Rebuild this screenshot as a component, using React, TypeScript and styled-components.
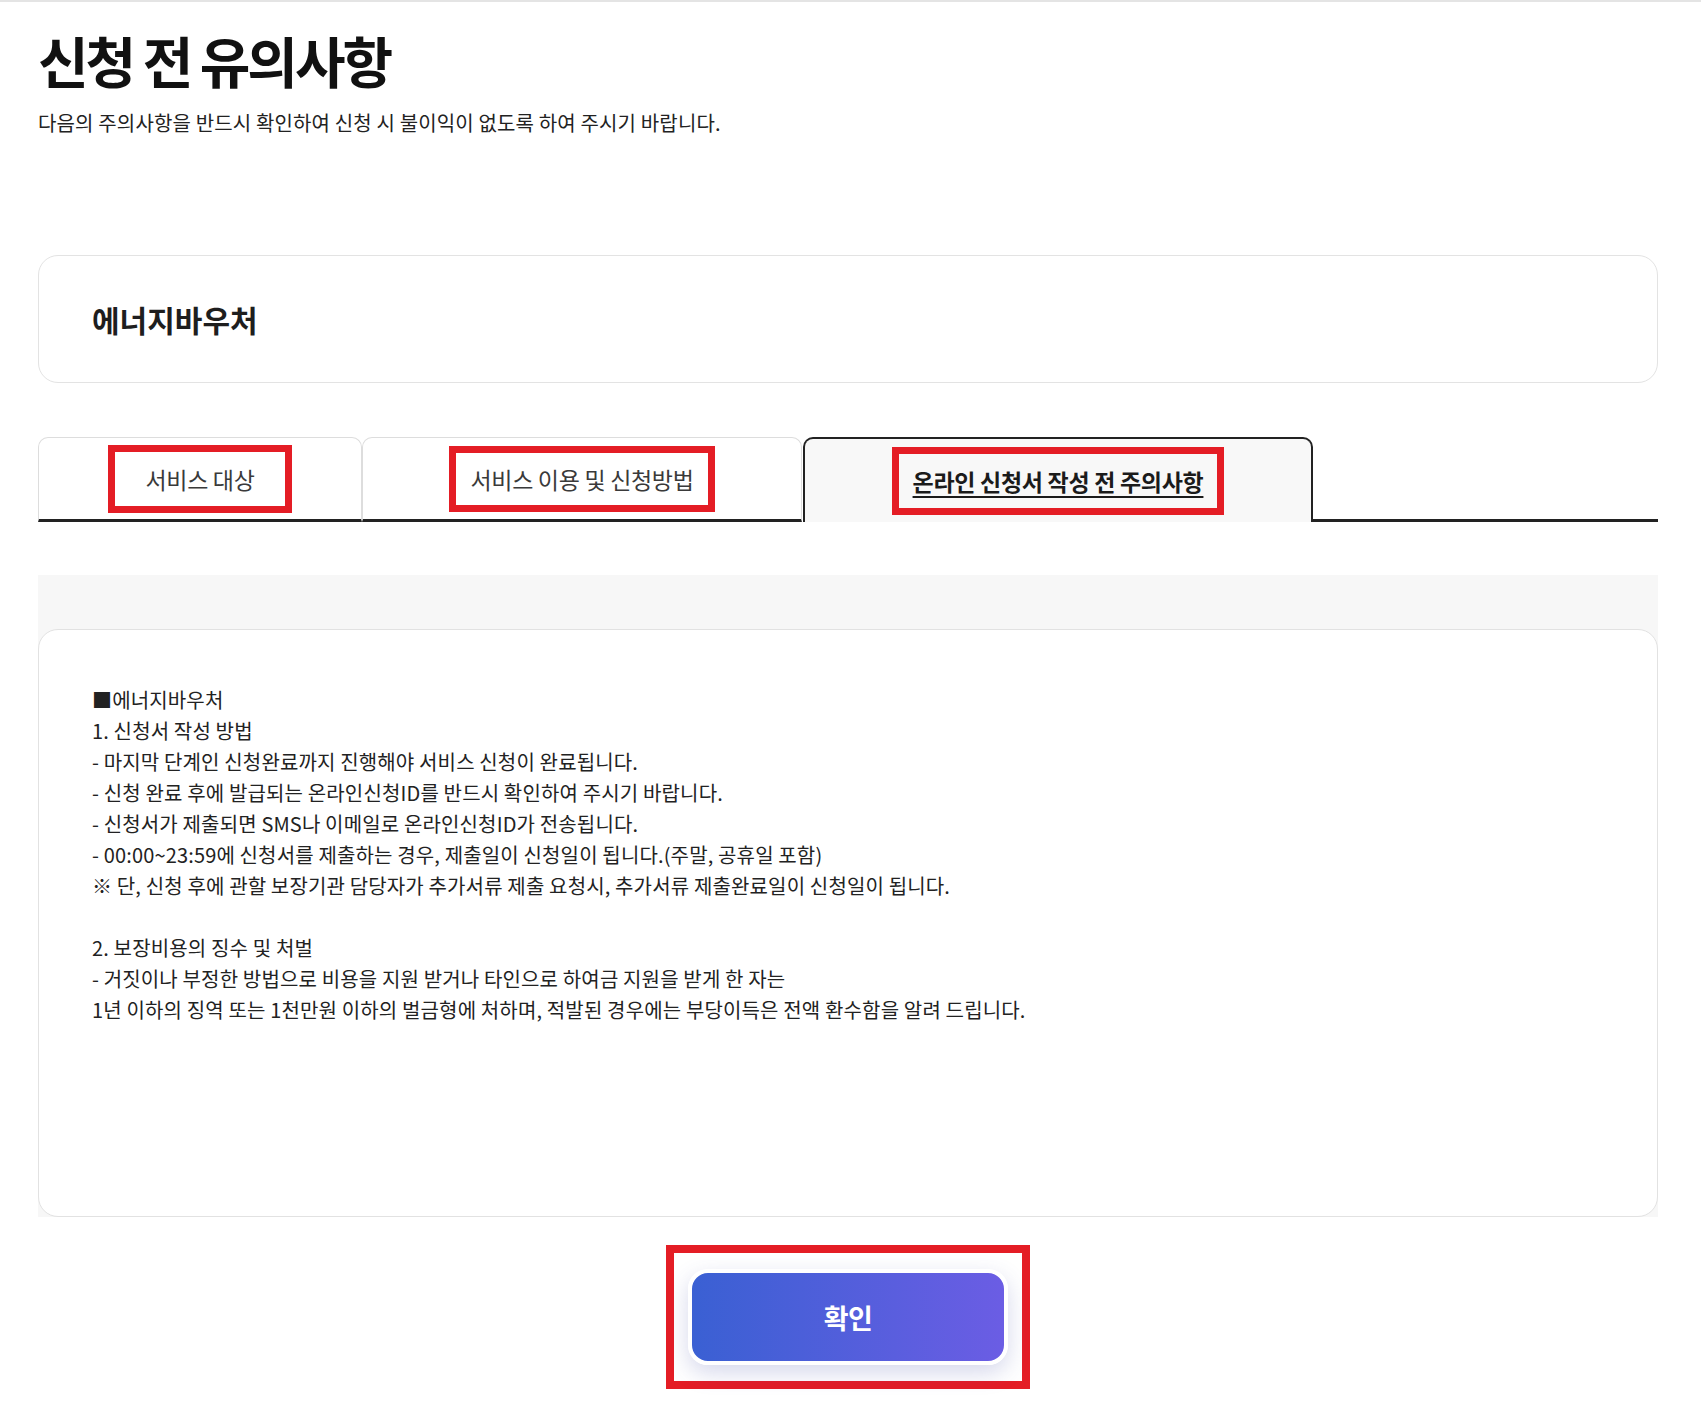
import React from "react";
import styled, { createGlobalStyle, css } from "styled-components";

const GlobalStyle = createGlobalStyle`
  html, body {
    margin: 0;
    padding: 0;
    background: #ffffff;
  }
  body {
    font-family: "Noto Sans CJK KR", "Noto Sans", sans-serif;
    color: #222222;
  }
  * { box-sizing: border-box; }
`;

const Page = styled.div`
  border-top: 2px solid #e4e4e4;
  padding: 25px 43px 16px 38px;
  width: 1701px;
`;

const Title = styled.h1`
  margin: 0;
  font-size: 55px;
  line-height: 64px;
  font-weight: 700;
  letter-spacing: -3px;
  color: #111111;
`;

const Subtitle = styled.p`
  margin: 17px 0 0;
  font-size: 20px;
  line-height: 30px;
  letter-spacing: 0.15px;
  color: #222222;
`;

const ServiceCard = styled.section`
  margin-top: 117px;
  height: 128px;
  border: 1px solid #e3e3e3;
  border-radius: 20px;
  padding: 0 53px;
  display: flex;
  align-items: center;
`;

const ServiceName = styled.h2`
  margin: 0;
  font-size: 30px;
  line-height: 40px;
  font-weight: 700;
  letter-spacing: 0;
  color: #1e1e1e;
`;

const TabRow = styled.div`
  margin-top: 54px;
  display: flex;
  height: 85px;
`;

const Tab = styled.div<{ $width: number; $active?: boolean }>`
  width: ${(p) => p.$width}px;
  flex: none;
  display: flex;
  align-items: center;
  justify-content: center;
  border-radius: 10px 10px 0 0;
  ${(p) =>
    p.$active
      ? css`
          border: 2px solid #222222;
          border-bottom: none;
          background: #f8f8f8;
          margin-left: 1px;
        `
      : css`
          border: 1px solid #dddddd;
          border-bottom: 3px solid #222222;
          background: #ffffff;
        `}
`;

const TabFill = styled.div`
  flex: 1;
  border-bottom: 3px solid #222222;
`;

const Highlight = styled.div<{ $px: number; $py: number; $bw: number }>`
  border: ${(p) => p.$bw}px solid #e41d25;
  padding: ${(p) => p.$py}px ${(p) => p.$px}px;
  display: flex;
  align-items: center;
  justify-content: center;
`;

const TabLabel = styled.span<{ $active?: boolean }>`
  font-size: 23px;
  line-height: 30px;
  letter-spacing: -0.3px;
  white-space: nowrap;
  color: ${(p) => (p.$active ? "#1b1b1b" : "#3a3a3a")};
  font-weight: ${(p) => (p.$active ? 700 : 400)};
  text-decoration: ${(p) => (p.$active ? "underline" : "none")};
  text-decoration-thickness: 2px;
  text-underline-offset: 5px;
`;

const Panel = styled.div`
  margin-top: 53px;
  background: #f7f7f7;
  padding-top: 54px;
`;

const NoticeCard = styled.div`
  background: #ffffff;
  border: 1px solid #e2e2e2;
  border-radius: 20px;
  height: 588px;
  padding: 54px 53px;
`;

const NoticeText = styled.p`
  margin: 0;
  font-size: 20px;
  line-height: 31px;
  letter-spacing: 0.15px;
  color: #222222;
  white-space: pre-line;
`;

const ButtonArea = styled.div`
  margin-top: 28px;
  display: flex;
  justify-content: center;
`;

const ConfirmButton = styled.button`
  width: 320px;
  height: 96px;
  border: 4px solid #ffffff;
  border-radius: 20px;
  background: linear-gradient(90deg, #3a60d3 0%, #6b5de4 100%);
  box-shadow: 0 8px 22px rgba(70, 76, 170, 0.22);
  color: #ffffff;
  font-family: "Noto Sans CJK KR", "Noto Sans", sans-serif;
  font-size: 27px;
  font-weight: 700;
  letter-spacing: -0.5px;
  cursor: pointer;
`;

const notice = `■에너지바우처
1. 신청서 작성 방법
- 마지막 단계인 신청완료까지 진행해야 서비스 신청이 완료됩니다.
- 신청 완료 후에 발급되는 온라인신청ID를 반드시 확인하여 주시기 바랍니다.
- 신청서가 제출되면 SMS나 이메일로 온라인신청ID가 전송됩니다.
- 00:00~23:59에 신청서를 제출하는 경우, 제출일이 신청일이 됩니다.(주말, 공휴일 포함)
※ 단, 신청 후에 관할 보장기관 담당자가 추가서류 제출 요청시, 추가서류 제출완료일이 신청일이 됩니다.

2. 보장비용의 징수 및 처벌
- 거짓이나 부정한 방법으로 비용을 지원 받거나 타인으로 하여금 지원을 받게 한 자는
1년 이하의 징역 또는 1천만원 이하의 벌금형에 처하며, 적발된 경우에는 부당이득은 전액 환수함을 알려 드립니다.`;

export default function App() {
  return (
    <>
      <GlobalStyle />
      <Page>
        <Title>신청 전 유의사항</Title>
        <Subtitle>다음의 주의사항을 반드시 확인하여 신청 시 불이익이 없도록 하여 주시기 바랍니다.</Subtitle>

        <ServiceCard>
          <ServiceName>에너지바우처</ServiceName>
        </ServiceCard>

        <TabRow>
          <Tab $width={324}>
            <Highlight $bw={7} $px={30} $py={12}>
              <TabLabel>서비스 대상</TabLabel>
            </Highlight>
          </Tab>
          <Tab $width={440}>
            <Highlight $bw={7} $px={14} $py={11}>
              <TabLabel>서비스 이용 및 신청방법</TabLabel>
            </Highlight>
          </Tab>
          <Tab $width={510} $active>
            <Highlight $bw={7} $px={14} $py={12}>
              <TabLabel $active>온라인 신청서 작성 전 주의사항</TabLabel>
            </Highlight>
          </Tab>
          <TabFill />
        </TabRow>

        <Panel>
          <NoticeCard>
            <NoticeText>{notice}</NoticeText>
          </NoticeCard>
        </Panel>

        <ButtonArea>
          <Highlight $bw={8} $px={14} $py={16}>
            <ConfirmButton type="button">확인</ConfirmButton>
          </Highlight>
        </ButtonArea>
      </Page>
    </>
  );
}
